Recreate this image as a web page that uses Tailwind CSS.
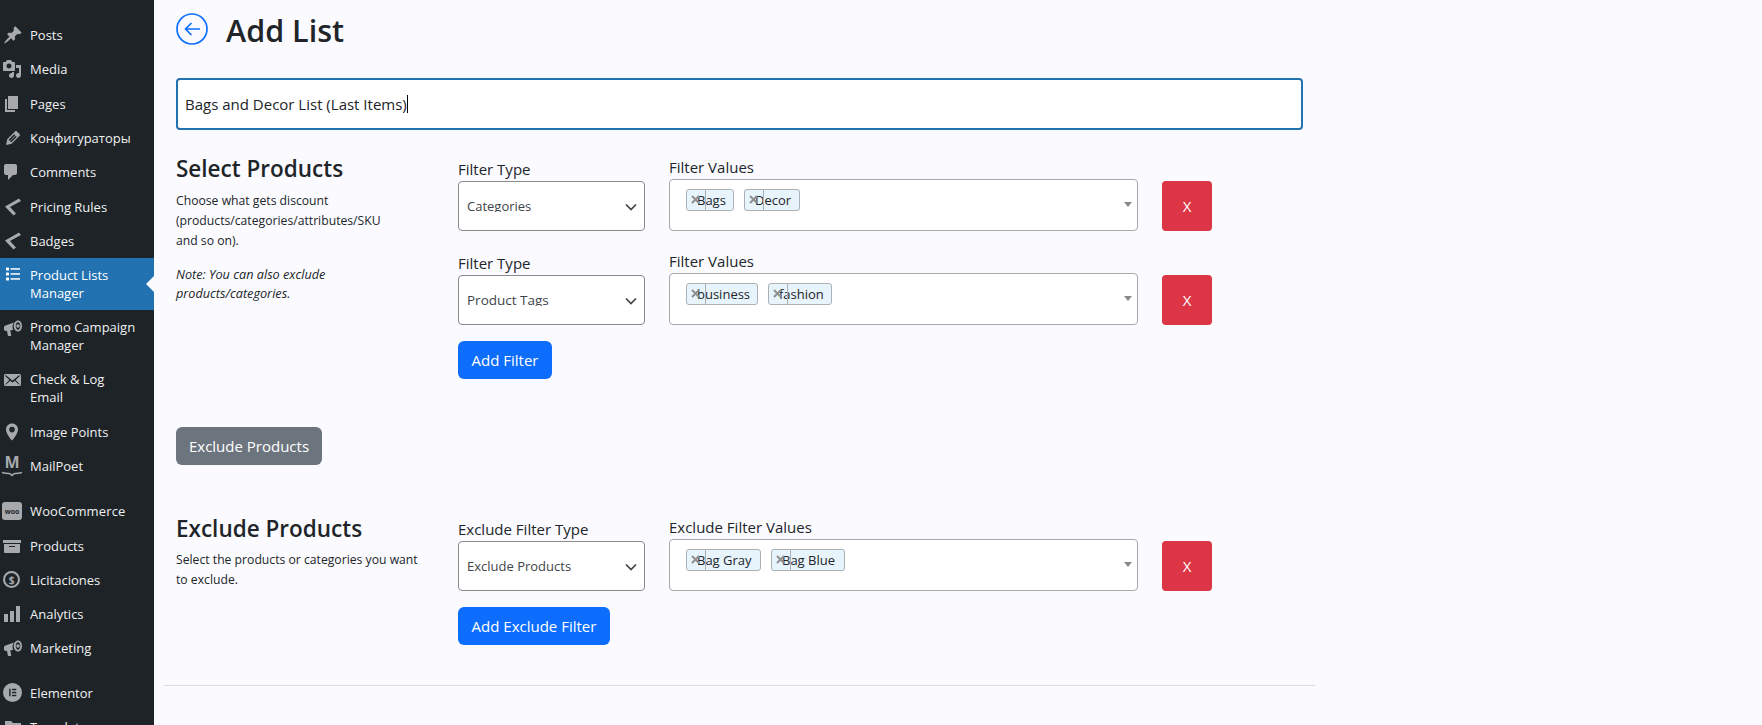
<!DOCTYPE html>
<html lang="en">
<head>
<meta charset="UTF-8">
<title>Add List</title>
<script src="https://cdn.jsdelivr.net/npm/@tailwindcss/browser@4"></script>
</head>
<body class="bg-[#fbfbff] font-['Open_Sans',sans-serif] text-[#212529] h-[725px] overflow-hidden">
<div class="flex h-[725px] overflow-hidden">

  <!-- admin menu -->
  <aside class="w-[154px] shrink-0 bg-[#1d2327] pt-[18px] text-[13px] leading-[18px] text-[#f0f0f1] overflow-hidden">
    <a class="flex h-[34.3px] items-center"><span class="w-[30px] pl-[3px] shrink-0"><svg class="w-5 h-5 fill-[#a7aaad]" viewBox="0 0 20 20"><path d="M10.44 3.02l1.82-1.82 6.36 6.35-1.83 1.82c-1.05-.68-2.48-.57-3.41.36l-.75.75c-.92.93-1.04 2.35-.35 3.41l-1.83 1.82-2.41-2.41-2.8 2.79c-.42.42-3.38 2.71-3.8 2.29s1.86-3.39 2.28-3.81l2.79-2.79L4.1 9.36l1.83-1.82c1.05.69 2.48.57 3.4-.36l.75-.75c.93-.92 1.05-2.35.36-3.41z"/></svg></span>Posts</a>
    <a class="flex h-[34.3px] items-center"><span class="w-[30px] pl-[2px] shrink-0"><svg class="w-5 h-5 fill-[#a7aaad]" viewBox="0 0 20 20"><path d="M13 11V4c0-.55-.45-1-1-1h-1.67L9 1H5L3.67 3H2c-.55 0-1 .45-1 1v7c0 .55.45 1 1 1h10c.55 0 1-.45 1-1zM7 4.5c1.38 0 2.5 1.12 2.5 2.5S8.38 9.5 7 9.5 4.5 8.38 4.5 7 5.62 4.5 7 4.5zM14 6h5v10.5c0 1.38-1.12 2.5-2.5 2.5S14 17.88 14 16.5s1.12-2.5 2.5-2.5c.17 0 .34.02.5.05V9h-3V6zm-4 8.05V13h2v3.5c0 1.38-1.12 2.5-2.5 2.5S7 17.88 7 16.5 8.12 14 9.5 14c.17 0 .34.02.5.05z"/></svg></span>Media</a>
    <a class="flex h-[34.3px] items-center"><span class="w-[30px] pl-[2px] shrink-0"><svg class="w-5 h-5 fill-[#a7aaad]" viewBox="0 0 20 20"><path d="M6 15V2h10v13H6zm-1 1h8v2H3V5h2v11z"/></svg></span>Pages</a>
    <a class="flex h-[34.3px] items-center"><span class="w-[30px] pl-[3px] shrink-0"><svg class="w-5 h-5 fill-[#a7aaad]" viewBox="0 0 20 20"><path d="M13.89 3.39l2.71 2.72c.46.46.42 1.24.03 1.64l-8.01 8.02-5.56 1.16 1.16-5.58s7.6-7.63 7.99-8.03c.39-.39 1.22-.39 1.68.07zm-2.73 2.79l-5.59 5.61 1.11 1.11 5.54-5.65zm-2.97 8.23l5.58-5.6-1.07-1.08-5.59 5.6z"/></svg></span>Конфигураторы</a>
    <a class="flex h-[34.3px] items-center"><span class="w-[30px] pl-[1px] shrink-0"><svg class="w-5 h-5 fill-[#a7aaad]" viewBox="0 0 20 20"><path d="M5 2h9c1.1 0 2 .9 2 2v7c0 1.1-.9 2-2 2h-2l-5 5v-5H5c-1.1 0-2-.9-2-2V4c0-1.1.9-2 2-2z"/></svg></span>Comments</a>
    <a class="flex h-[34.3px] items-center"><span class="w-[30px] pl-[3px] shrink-0"><svg class="w-5 h-5 fill-[#a7aaad]" viewBox="0 0 20 20"><path d="M16 1.500l2 2.500L7 10l6 6.500-2.500 2L2 9.500z"/></svg></span>Pricing Rules</a>
    <a class="flex h-[34.3px] items-center"><span class="w-[30px] pl-[3px] shrink-0"><svg class="w-5 h-5 fill-[#a7aaad]" viewBox="0 0 20 20"><path d="M16 1.500l2 2.500L7 10l6 6.500-2.500 2L2 9.500z"/></svg></span>Badges</a>

    <a class="relative flex h-[52px] bg-[#2271b1] text-white pt-[8px]">
      <span class="w-[30px] pl-[6px] pt-[1px] shrink-0"><svg class="w-[14px] h-[14px] fill-white" viewBox="0 0 14 14"><rect x="0" y="0.5" width="3" height="3" rx=".6"/><rect x="0" y="5.5" width="3" height="3" rx=".6"/><rect x="0" y="10.5" width="3" height="3" rx=".6"/><rect x="4.5" y="1.2" width="9.5" height="1.5"/><rect x="4.5" y="6.2" width="9.5" height="1.5"/><rect x="4.5" y="11.2" width="9.5" height="1.5"/></svg></span>
      <span>Product Lists<br>Manager</span>
      <span class="absolute right-0 top-[18px] w-0 h-0 border-y-[8px] border-y-transparent border-r-[8px] border-r-[#fbfbff]"></span>
    </a>
    <a class="flex h-[52px] pt-[8px]"><span class="w-[30px] pl-[3px] shrink-0"><svg class="w-5 h-5 fill-[#a7aaad]" viewBox="0 0 20 20"><path d="M1 9.500c0-1 .6-1.600 1.600-1.900L11 4.500c-1 1.400-1.500 3-1.500 4.400 0 1 .3 2 .8 2.800l-3 .7.9 4.600c.1.500-.2.900-.7.900H5.600c-.4 0-.7-.3-.8-.7L4 12.800 2.700 13C1.700 13 1 12 1 11z"/><path fill-rule="evenodd" d="M15 2.500c2.500 0 4 2.500 4 5.500s-1.500 5.500-4 5.500-4.300-2.500-4.300-5.500S12.500 2.500 15 2.500zm0 1.800c-1.300 0-2.300 1.700-2.300 3.700s1 3.700 2.300 3.700 2.300-1.700 2.300-3.700-1-3.700-2.300-3.700zm0 2a1.700 1.700 0 1 1 0 3.400 1.700 1.700 0 0 1 0-3.400z"/></svg></span><span>Promo Campaign<br>Manager</span></a>
    <a class="flex h-[52px] pt-[8px]"><span class="w-[30px] pl-[2px] shrink-0"><svg class="w-5 h-5 fill-[#a7aaad]" viewBox="0 0 20 20"><path d="M19 14.500v-9c0-.83-.67-1.500-1.500-1.500H3.490c-.83 0-1.500.67-1.500 1.500v9c0 .83.67 1.500 1.500 1.500H17.500c.83 0 1.500-.67 1.500-1.500zm-1.310-9.110c.33.33.15.67-.03.84L13.600 9.950l3.900 4.060c.12.14.2.36.06.51-.13.16-.43.15-.56.05l-4.370-3.730-2.140 1.950-2.130-1.950-4.370 3.730c-.13.1-.43.11-.56-.05-.14-.15-.06-.37.06-.51l3.900-4.060-4.060-3.720c-.18-.17-.36-.51-.03-.84s.67-.17.95.07l6.240 5.040 6.250-5.040c.28-.24.62-.4.95-.07z"/></svg></span><span>Check &amp; Log<br>Email</span></a>
    <a class="flex h-[36px] items-center"><span class="w-[30px] pl-[2px] shrink-0"><svg class="w-5 h-5 fill-[#a7aaad]" viewBox="0 0 20 20"><path fill-rule="evenodd" d="M10 1.500c3.300 0 6 2.600 6 5.900 0 3.300-3.500 8.500-6 11.100-2.500-2.600-6-7.800-6-11.100 0-3.300 2.700-5.900 6-5.900zm0 3.300a2.800 2.800 0 1 0 0 5.600 2.800 2.800 0 0 0 0-5.600z"/></svg></span>Image Points</a>
    <a class="flex h-[32px] items-center relative"><span class="w-[30px] shrink-0 relative"><span class="block text-center w-6 -mt-[9px] font-bold text-[16px] leading-[18px] text-[#a7aaad]">M</span><svg class="absolute left-[2px] top-[9px] w-5 h-[6px] stroke-[#a7aaad] fill-none" viewBox="0 0 20 6"><path d="M0 1.500c4 1 6 1 8 1.200L10 4.500l2-1.800c2-.2 4-.2 8-1.200" stroke-width="1.500"/></svg></span>MailPoet</a>

    <a class="flex h-[34.3px] items-center mt-[12px]"><span class="w-[30px] pl-[2px] shrink-0"><span class="flex w-5 h-[18px] items-center justify-center rounded-[3px] bg-[#a7aaad] text-[7px] font-bold leading-none text-[#1d2327]">woo</span></span><span class="tracking-[0.15px]">WooCommerce</span></a>
    <a class="flex h-[34.3px] items-center"><span class="w-[30px] pl-[2px] shrink-0"><svg class="w-5 h-5 fill-[#a7aaad]" viewBox="0 0 20 20"><path d="M19 4v3H1V4h18zM2 8h16v8c0 .55-.45 1-1 1H3c-.55 0-1-.45-1-1V8zm5 2v1h6v-1H7z"/></svg></span>Products</a>
    <a class="flex h-[34.3px] items-center"><span class="w-[30px] pl-[3px] shrink-0"><span class="flex w-[17px] h-[17px] items-center justify-center rounded-full border-2 border-[#a7aaad] text-[10px] font-bold leading-none text-[#a7aaad]">$</span></span>Licitaciones</a>
    <a class="flex h-[34.3px] items-center"><span class="w-[30px] pl-[2px] shrink-0"><svg class="w-5 h-5 fill-[#a7aaad]" viewBox="0 0 20 20"><path d="M18 18V2h-4v16h4zm-6 0V7H8v11h4zm-6 0v-8H2v8h4z"/></svg></span>Analytics</a>
    <a class="flex h-[34.3px] items-center"><span class="w-[30px] pl-[3px] shrink-0"><svg class="w-5 h-5 fill-[#a7aaad]" viewBox="0 0 20 20"><path d="M1 9.500c0-1 .6-1.600 1.600-1.900L11 4.500c-1 1.400-1.500 3-1.500 4.400 0 1 .3 2 .8 2.800l-3 .7.9 4.600c.1.500-.2.900-.7.900H5.600c-.4 0-.7-.3-.8-.7L4 12.800 2.700 13C1.700 13 1 12 1 11z"/><path fill-rule="evenodd" d="M15 2.500c2.500 0 4 2.500 4 5.500s-1.500 5.500-4 5.500-4.300-2.500-4.300-5.500S12.500 2.500 15 2.500zm0 1.800c-1.300 0-2.300 1.700-2.300 3.700s1 3.700 2.300 3.700 2.300-1.700 2.300-3.700-1-3.700-2.300-3.700zm0 2a1.700 1.700 0 1 1 0 3.400 1.700 1.700 0 0 1 0-3.400z"/></svg></span>Marketing</a>

    <a class="flex h-[34.3px] items-center mt-[10px]"><span class="w-[30px] pl-[3px] shrink-0"><svg class="w-[19px] h-[19px] fill-[#a7aaad]" viewBox="0 0 20 20"><path fill-rule="evenodd" d="M10 0a10 10 0 1 1 0 20 10 10 0 0 1 0-20zM6.500 6v8H8V6zm3 0v1.600h4.500V6zm0 3.200v1.600h4.500V9.200zm0 3.200V14h4.500v-1.600z"/></svg></span>Elementor</a>
    <a class="flex h-[34.3px] items-center"><span class="w-[30px] pl-[3px] shrink-0"><svg class="w-5 h-5 fill-[#a7aaad]" viewBox="0 0 20 20"><path d="M2 4h6l2 2h8v11H2z"/></svg></span>Templates</a>
  </aside>

  <!-- page content -->
  <main class="w-[1172px] pl-[22px] pr-[12px] relative">
    <div class="flex items-center h-[45px] pt-[13px] mb-[33px]">
      <svg class="w-8 h-8 mr-[18px] fill-none stroke-[#0d6efd]" viewBox="0 0 32 32"><circle cx="16" cy="16" r="15" stroke-width="1.700"/><path d="M24 16H9.500M15.500 10L9.500 16l6 6" stroke-width="1.700"/></svg>
      <h1 class="text-[30.5px] font-semibold leading-[34px] pt-[2px]">Add List</h1>
    </div>

    <div class="relative flex items-center w-[1127px] h-[52px] bg-white border-2 border-[#2271b1] rounded-[4px] pl-[7px] text-[15px]">Bags and Decor List (Last Items)<span class="w-px h-[18px] bg-black"></span></div>

    <section class="flex mt-[20px]">
      <div class="w-[282px] shrink-0 text-[12.2px] leading-[20px]">
        <h2 class="text-[22.5px] font-semibold leading-[38px] mb-[3px]">Select Products</h2>
        <p>Choose what gets discount<br>(products/categories/attributes/SKU<br>and so on).</p>
        <p class="italic text-[12.7px] mt-[14px] leading-[19px]">Note: You can also exclude<br>products/categories.</p>
      </div>
      <div>
        <div class="flex h-[94px]">
          <div class="w-[187px] pt-[9px]">
            <label class="block text-[15px] leading-[20px] mb-[2px]">Filter Type</label>
            <div class="relative h-[50px] w-[187px] bg-white border border-[#8a8a8a] rounded-[4px] pl-[8px] pt-[14px] text-[13px] leading-[20px] text-[#3f444a]"><span class="block h-[16px] overflow-hidden">Categories</span><svg class="absolute right-[7px] top-[21px] w-3 h-2 fill-none stroke-[#444]" viewBox="0 0 12 8"><path d="M1 1.500l5 5 5-5" stroke-width="1.700"/></svg></div>
          </div>
          <div class="w-[469px] ml-[24px] pt-[7px]">
            <label class="block text-[15px] leading-[20px] mb-[2px]">Filter Values</label>
            <div class="relative h-[52px] bg-white border border-[#a8a8a8] rounded-[4px] pl-[16px] pt-[9px] flex gap-[10px] items-start">
              <span class="relative h-[22px] w-[48px] bg-[#e8f4fb] border border-[#aab0b3] rounded-[3px] pl-[10px] text-[13px] leading-[21px]"><span class="absolute left-[18px] top-0 h-full w-px bg-[#aab0b3]"></span>Bags<svg class="absolute left-[4px] top-[5px] w-[9px] h-[9px] stroke-[#8f8f8f]" viewBox="0 0 9 9"><path d="M1 1l7 7M8 1L1 8" stroke-width="2"/></svg></span>
              <span class="relative h-[22px] w-[56px] bg-[#e8f4fb] border border-[#aab0b3] rounded-[3px] pl-[10px] text-[13px] leading-[21px]"><span class="absolute left-[18px] top-0 h-full w-px bg-[#aab0b3]"></span>Decor<svg class="absolute left-[4px] top-[5px] w-[9px] h-[9px] stroke-[#8f8f8f]" viewBox="0 0 9 9"><path d="M1 1l7 7M8 1L1 8" stroke-width="2"/></svg></span>
              <span class="absolute right-[5px] top-[22px] border-x-[4px] border-x-transparent border-t-[5px] border-t-[#888]"></span>
            </div>
          </div>
          <button class="w-[50px] h-[50px] ml-[24px] mt-[31px] bg-[#dc3545] text-white rounded-[4px] text-[15px]">X</button>
        </div>
        <div class="flex h-[94px]">
          <div class="w-[187px] pt-[9px]">
            <label class="block text-[15px] leading-[20px] mb-[2px]">Filter Type</label>
            <div class="relative h-[50px] w-[187px] bg-white border border-[#8a8a8a] rounded-[4px] pl-[8px] pt-[14px] text-[13.5px] leading-[20px] text-[#3f444a]"><span class="block h-[16px] overflow-hidden">Product Tags</span><svg class="absolute right-[7px] top-[21px] w-3 h-2 fill-none stroke-[#444]" viewBox="0 0 12 8"><path d="M1 1.500l5 5 5-5" stroke-width="1.700"/></svg></div>
          </div>
          <div class="w-[469px] ml-[24px] pt-[7px]">
            <label class="block text-[15px] leading-[20px] mb-[2px]">Filter Values</label>
            <div class="relative h-[52px] bg-white border border-[#a8a8a8] rounded-[4px] pl-[16px] pt-[9px] flex gap-[10px] items-start">
              <span class="relative h-[22px] w-[72px] bg-[#e8f4fb] border border-[#aab0b3] rounded-[3px] pl-[10px] text-[13px] leading-[21px]"><span class="absolute left-[18px] top-0 h-full w-px bg-[#aab0b3]"></span>business<svg class="absolute left-[4px] top-[5px] w-[9px] h-[9px] stroke-[#8f8f8f]" viewBox="0 0 9 9"><path d="M1 1l7 7M8 1L1 8" stroke-width="2"/></svg></span>
              <span class="relative h-[22px] w-[64px] bg-[#e8f4fb] border border-[#aab0b3] rounded-[3px] pl-[10px] text-[13px] leading-[21px]"><span class="absolute left-[18px] top-0 h-full w-px bg-[#aab0b3]"></span>fashion<svg class="absolute left-[4px] top-[5px] w-[9px] h-[9px] stroke-[#8f8f8f]" viewBox="0 0 9 9"><path d="M1 1l7 7M8 1L1 8" stroke-width="2"/></svg></span>
              <span class="absolute right-[5px] top-[22px] border-x-[4px] border-x-transparent border-t-[5px] border-t-[#888]"></span>
            </div>
          </div>
          <button class="w-[50px] h-[50px] ml-[24px] mt-[31px] bg-[#dc3545] text-white rounded-[4px] text-[15px]">X</button>
        </div>
        <button class="block w-[94px] h-[38px] mt-[3px] bg-[#0d6efd] text-white rounded-[6px] text-[15px]">Add Filter</button>
      </div>
    </section>

    <button class="block w-[146px] h-[38px] mt-[48px] bg-[#6c757d] text-white rounded-[6px] text-[15px]">Exclude Products</button>

    <section class="flex mt-[45px]">
      <div class="w-[282px] shrink-0 text-[12.2px] leading-[20px]">
        <h2 class="text-[22.5px] font-semibold leading-[38px] mb-[2px]">Exclude Products</h2>
        <p>Select the products or categories you want<br>to exclude.</p>
      </div>
      <div>
        <div class="flex">
          <div class="w-[187px] pt-[9px]">
            <label class="block text-[15px] leading-[20px] mb-[2px]">Exclude Filter Type</label>
            <div class="relative h-[50px] w-[187px] bg-white border border-[#8a8a8a] rounded-[4px] pl-[8px] pt-[14px] text-[13px] leading-[20px] text-[#3f444a]"><span class="block h-[16px] overflow-hidden">Exclude Products</span><svg class="absolute right-[7px] top-[21px] w-3 h-2 fill-none stroke-[#444]" viewBox="0 0 12 8"><path d="M1 1.500l5 5 5-5" stroke-width="1.700"/></svg></div>
          </div>
          <div class="w-[469px] ml-[24px] pt-[7px]">
            <label class="block text-[15px] leading-[20px] mb-[2px]">Exclude Filter Values</label>
            <div class="relative h-[52px] bg-white border border-[#a8a8a8] rounded-[4px] pl-[16px] pt-[9px] flex gap-[10px] items-start">
              <span class="relative h-[22px] w-[75px] bg-[#e8f4fb] border border-[#aab0b3] rounded-[3px] pl-[10px] text-[13px] leading-[21px]"><span class="absolute left-[18px] top-0 h-full w-px bg-[#aab0b3]"></span>Bag Gray<svg class="absolute left-[4px] top-[5px] w-[9px] h-[9px] stroke-[#8f8f8f]" viewBox="0 0 9 9"><path d="M1 1l7 7M8 1L1 8" stroke-width="2"/></svg></span>
              <span class="relative h-[22px] w-[74px] bg-[#e8f4fb] border border-[#aab0b3] rounded-[3px] pl-[10px] text-[13px] leading-[21px]"><span class="absolute left-[18px] top-0 h-full w-px bg-[#aab0b3]"></span>Bag Blue<svg class="absolute left-[4px] top-[5px] w-[9px] h-[9px] stroke-[#8f8f8f]" viewBox="0 0 9 9"><path d="M1 1l7 7M8 1L1 8" stroke-width="2"/></svg></span>
              <span class="absolute right-[5px] top-[22px] border-x-[4px] border-x-transparent border-t-[5px] border-t-[#888]"></span>
            </div>
          </div>
          <button class="w-[50px] h-[50px] ml-[24px] mt-[31px] bg-[#dc3545] text-white rounded-[4px] text-[15px]">X</button>
        </div>
        <button class="block w-[152px] h-[38px] mt-[16px] bg-[#0d6efd] text-white rounded-[6px] text-[15px]">Add Exclude Filter</button>
      </div>
    </section>

    <hr class="ml-[-12px] w-[1151px] mt-[40px] border-t border-[#dcdce0]">
  </main>
</div>
</body>
</html>
